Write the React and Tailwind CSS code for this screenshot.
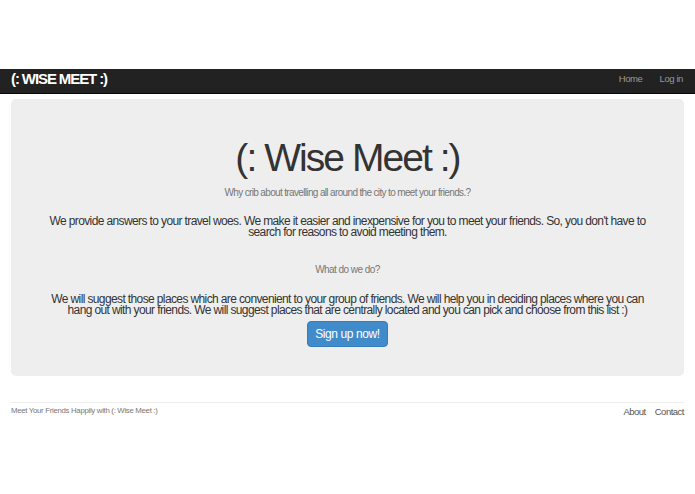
import React from "react";

const Navbar = () => {
  return (
    <div className="h-[25px] bg-[#222] border-b border-[#080808] flex items-center justify-between px-[11px] pb-[4px]">
      <span className="text-white font-bold text-[15px] tracking-[-1.1px]">(: WISE MEET :)</span>
      <div className="flex gap-[17px] pr-[1px] text-[9.5px] text-[#999] tracking-[-0.4px]">
        <span>Home</span>
        <span>Log in</span>
      </div>
    </div>
  );
};

const App = () => {
  return (
    <div className="w-[695px] h-[494px] bg-white text-[#333]" style={{ fontFamily: '"Liberation Sans", Arial, sans-serif' }}>
      <div className="h-[69px]" />
      <Navbar />
      <div className="mx-[11px] mt-[5px] h-[277px] bg-[#eee] rounded-[5px] flex flex-col items-center pt-[38px]">
        <h1 className="text-[39px] leading-[42px] font-light tracking-[-1.95px] text-[#333]">(: Wise Meet :)</h1>
        <p className="mt-[8px] text-[10px] leading-[12px] text-[#777] tracking-[-0.65px]">
          Why crib about travelling all around the city to meet your friends.?
        </p>
        <p className="mt-[17px] px-[30px] text-center text-[12px] leading-[11px] tracking-[-0.62px] text-[#333]">
          We provide answers to your travel woes. We make it easier and inexpensive for you to meet your friends. So, you don't have to search for reasons to avoid meeting them.
        </p>
        <p className="mt-[26px] text-[10px] leading-[12px] text-[#777] tracking-[-0.55px]">What do we do?</p>
        <p className="mt-[18px] px-[30px] text-center text-[12px] leading-[11px] tracking-[-0.62px] text-[#333]">
          We will suggest those places which are convenient to your group of friends. We will help you in deciding places where you can hang out with your friends. We will suggest places that are centrally located and you can pick and choose from this list :)
        </p>
        <button className="mt-[5px] w-[81px] h-[26px] rounded-[4px] bg-[#428bca] border border-[#357ebd] text-white text-[12px] tracking-[-0.4px]">
          Sign up now!
        </button>
      </div>
      <div className="mx-[11px] mt-[26px] border-t border-[#eee] flex justify-between items-start pt-[2px]">
        <span className="text-[7.8px] text-[#777] tracking-[-0.3px]">Meet Your Friends Happily with (: Wise Meet :)</span>
        <div className="flex gap-[9px] text-[9.5px] text-[#555] tracking-[-0.5px]">
          <span>About</span>
          <span>Contact</span>
        </div>
      </div>
    </div>
  );
};

export default App;
